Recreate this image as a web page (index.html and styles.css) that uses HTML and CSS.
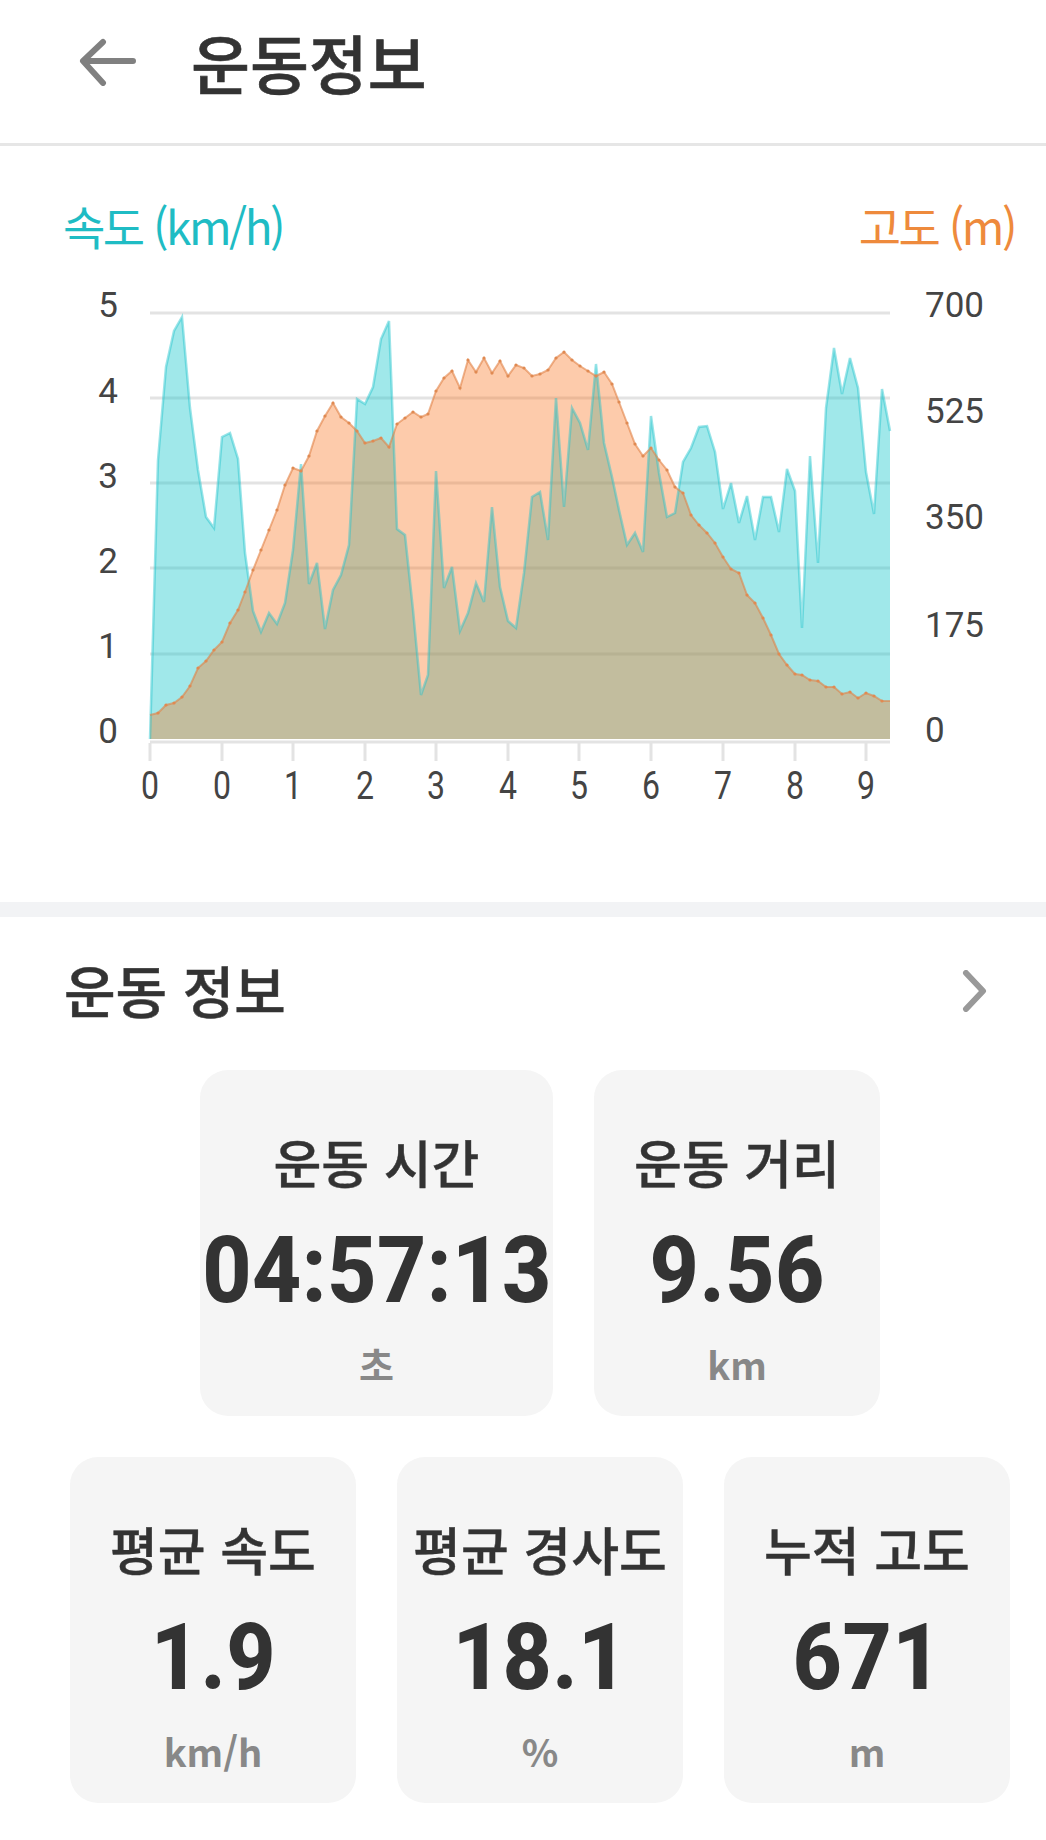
FILE: index.html
```html
<!DOCTYPE html>
<html lang="ko">

<head>
  <meta charset="UTF-8">
  <meta name="viewport" content="width=device-width, initial-scale=1.0">
  <title>운동정보</title>
  <link rel="stylesheet" href="styles.css">
</head>

<body>
  <div class="page">
    <!--상단 제목-->
    <header class="top-bar">
      <svg class="back-icon" width="60" height="48" viewBox="0 0 60 48">
        <path d="M54 23H5M24 4L4 23L24 45" />
      </svg>
      <h1 class="top-title">운동정보</h1>
    </header>

    <!--그래프-->
    <section class="chart-section">
      <div class="chart-head">
        <span class="speed-title">속도 (km/h)</span>
        <span class="alt-title">고도 (m)</span>
      </div>
      <svg class="chart" width="1046" height="632" viewBox="0 270 1046 632">
        <defs>
          <marker id="dot" markerWidth="4" markerHeight="4" refX="2" refY="2" markerUnits="userSpaceOnUse">
            <circle cx="2" cy="2" r="1.6" fill="#e08a52" />
          </marker>
        </defs>

        <g class="grid">
          <path d="M150 313H890M150 398H890M150 483H890M150 568H890M150 654H890" />
          <path d="M150 742H890" />
          <path d="M150 743V761M222 743V761M293 743V761M365 743V761M436 743V761M508 743V761M579 743V761M651 743V761M723 743V761M795 743V761M866 743V761" />
        </g>

        <polygon class="speed-area" points="150,739 158,460 166,367 174,331 182,317 190,408 198,470 206,517 214,528 222,437 230,433 238,459 245,553 253,611 261,632 269,613 277,624 285,603 293,550 301,464 309,584 317,563 325,629 333,590 341,575 349,545 357,399 365,404 373,387 381,339 389,321 397,529 405,535 413,610 421,695 428,675 436,471 444,588 452,567 460,631 468,613 476,583 484,602 492,507 500,587 508,621 516,628 524,573 532,497 540,492 548,540 556,398 564,507 572,408 580,423 588,450 596,364 604,443 612,477 619,510 627,545 635,533 643,552 651,416 659,473 667,517 675,513 683,462 691,448 699,427 707,426 715,452 723,509 731,483 739,523 747,496 755,540 763,497 771,497 779,532 787,469 795,491 802,628 810,456 818,563 826,408 834,348 842,394 850,358 858,388 866,472 874,514 882,389 890,431 890,739" />
        <polygon class="alt-area" points="150,739 150,715 158,713 166,705 174,703 182,697 190,686 198,668 206,661 214,650 222,642 230,623 238,610 245,592 253,570 261,550 269,530 277,510 285,485 293,468 301,471 309,456 317,431 325,416 333,403 341,417 349,423 357,431 365,443 373,441 381,438 389,447 397,424 405,418 413,412 421,417 428,414 436,391 444,378 452,371 460,388 468,360 476,372 484,358 492,373 500,361 508,376 516,365 524,368 532,376 540,374 548,370 556,358 564,352 572,360 580,366 588,371 596,376 604,372 612,384 619,402 627,423 635,444 643,456 651,448 659,460 667,470 675,487 683,493 691,515 699,525 707,533 715,543 723,557 731,569 739,573 747,595 755,603 763,618 771,635 779,654 787,665 795,674 802,675 810,680 818,681 826,687 834,687 842,694 850,692 858,698 866,693 874,696 882,701 890,701 890,739" />
        <polyline class="speed-line" points="150,739 158,460 166,367 174,331 182,317 190,408 198,470 206,517 214,528 222,437 230,433 238,459 245,553 253,611 261,632 269,613 277,624 285,603 293,550 301,464 309,584 317,563 325,629 333,590 341,575 349,545 357,399 365,404 373,387 381,339 389,321 397,529 405,535 413,610 421,695 428,675 436,471 444,588 452,567 460,631 468,613 476,583 484,602 492,507 500,587 508,621 516,628 524,573 532,497 540,492 548,540 556,398 564,507 572,408 580,423 588,450 596,364 604,443 612,477 619,510 627,545 635,533 643,552 651,416 659,473 667,517 675,513 683,462 691,448 699,427 707,426 715,452 723,509 731,483 739,523 747,496 755,540 763,497 771,497 779,532 787,469 795,491 802,628 810,456 818,563 826,408 834,348 842,394 850,358 858,388 866,472 874,514 882,389 890,431" />
        <polyline class="alt-line" points="150,715 158,713 166,705 174,703 182,697 190,686 198,668 206,661 214,650 222,642 230,623 238,610 245,592 253,570 261,550 269,530 277,510 285,485 293,468 301,471 309,456 317,431 325,416 333,403 341,417 349,423 357,431 365,443 373,441 381,438 389,447 397,424 405,418 413,412 421,417 428,414 436,391 444,378 452,371 460,388 468,360 476,372 484,358 492,373 500,361 508,376 516,365 524,368 532,376 540,374 548,370 556,358 564,352 572,360 580,366 588,371 596,376 604,372 612,384 619,402 627,423 635,444 643,456 651,448 659,460 667,470 675,487 683,493 691,515 699,525 707,533 715,543 723,557 731,569 739,573 747,595 755,603 763,618 771,635 779,654 787,665 795,674 802,675 810,680 818,681 826,687 834,687 842,694 850,692 858,698 866,693 874,696 882,701 890,701" />

        <g class="axis-left">
          <text x="118" y="317">5</text>
          <text x="118" y="403">4</text>
          <text x="118" y="488">3</text>
          <text x="118" y="573">2</text>
          <text x="118" y="658">1</text>
          <text x="118" y="743">0</text>
        </g>
        <g class="axis-right">
          <text x="925" y="317">700</text>
          <text x="925" y="423">525</text>
          <text x="925" y="529">350</text>
          <text x="925" y="637">175</text>
          <text x="925" y="742">0</text>
        </g>
        <g class="axis-bottom">
          <text x="150" y="799" textLength="18" lengthAdjust="spacingAndGlyphs">0</text>
          <text x="222" y="799" textLength="18" lengthAdjust="spacingAndGlyphs">0</text>
          <text x="293" y="799" textLength="18" lengthAdjust="spacingAndGlyphs">1</text>
          <text x="365" y="799" textLength="18" lengthAdjust="spacingAndGlyphs">2</text>
          <text x="436" y="799" textLength="18" lengthAdjust="spacingAndGlyphs">3</text>
          <text x="508" y="799" textLength="18" lengthAdjust="spacingAndGlyphs">4</text>
          <text x="579" y="799" textLength="18" lengthAdjust="spacingAndGlyphs">5</text>
          <text x="651" y="799" textLength="18" lengthAdjust="spacingAndGlyphs">6</text>
          <text x="723" y="799" textLength="18" lengthAdjust="spacingAndGlyphs">7</text>
          <text x="795" y="799" textLength="18" lengthAdjust="spacingAndGlyphs">8</text>
          <text x="866" y="799" textLength="18" lengthAdjust="spacingAndGlyphs">9</text>
        </g>
      </svg>
    </section>

    <div class="band"></div>

    <!--운동 정보-->
    <section class="info">
      <div class="info-head">
        <h2 class="info-title">운동 정보</h2>
        <svg class="chevron" width="26" height="42" viewBox="0 0 26 42">
          <path d="M4 3L21 21L4 39" />
        </svg>
      </div>

      <div class="card-grid">
        <div class="card-row">
          <div class="card card-wide">
            <div class="card-label">운동 시간</div>
            <div class="card-value">04:57:13</div>
            <div class="card-unit">초</div>
          </div>
          <div class="card">
            <div class="card-label">운동 거리</div>
            <div class="card-value">9.56</div>
            <div class="card-unit">km</div>
          </div>
        </div>
        <div class="card-row">
          <div class="card">
            <div class="card-label">평균 속도</div>
            <div class="card-value">1.9</div>
            <div class="card-unit">km/h</div>
          </div>
          <div class="card">
            <div class="card-label">평균 경사도</div>
            <div class="card-value">18.1</div>
            <div class="card-unit">%</div>
          </div>
          <div class="card">
            <div class="card-label">누적 고도</div>
            <div class="card-value">671</div>
            <div class="card-unit">m</div>
          </div>
        </div>
      </div>
    </section>
  </div>
</body>

</html>
```

FILE: styles.css
```css
* {
  margin: 0;
  padding: 0;
  box-sizing: border-box;
}

body {
  background-color: #fff;
  font-family: "Noto Sans CJK KR", "Roboto", sans-serif;
  color: #333;
}

.page {
  width: 1046px;
  height: 1840px;
  overflow: hidden;
}

/*상단 제목*/
.top-bar {
  height: 146px;
  padding: 0 0 20px 79px;
  display: flex;
  align-items: center;
  border-bottom: 3px solid #e6e6e6;
}

.back-icon {
  display: block;
}

.back-icon path {
  fill: none;
  stroke: #808080;
  stroke-width: 6;
  stroke-linecap: round;
  stroke-linejoin: round;
}

.top-title {
  margin-left: 52px;
  margin-bottom: 2px;
  font-size: 64px;
  line-height: 80px;
  font-weight: 500;
  -webkit-text-stroke: 0.6px #333;
}

/*그래프*/
.chart-section {
  height: 756px;
}

.chart-head {
  height: 124px;
  padding: 47px 31px 0 63px;
  display: flex;
  justify-content: space-between;
  font-size: 46px;
  line-height: 64px;
  letter-spacing: -2.5px;
}

.speed-title {
  color: #1fbcc4;
}

.alt-title {
  color: #ee8a3c;
}

.chart {
  display: block;
}

.grid path {
  fill: none;
  stroke: #e3e3e3;
  stroke-width: 3;
}

.speed-area {
  fill: rgba(17, 197, 202, 0.4);
}

.alt-area {
  fill: rgba(250, 118, 34, 0.38);
}

.speed-line {
  fill: none;
  stroke: rgba(30, 195, 205, 0.45);
  stroke-width: 2.5;
}

.alt-line {
  fill: none;
  stroke: rgba(225, 130, 70, 0.6);
  stroke-width: 2;
  marker-mid: url(#dot);
}

.axis-left text,
.axis-right text,
.axis-bottom text {
  font-family: "Roboto", sans-serif;
  font-size: 35px;
  fill: #444;
}

.axis-left text {
  text-anchor: end;
}

.axis-bottom text {
  font-size: 38px;
  text-anchor: middle;
}

.band {
  height: 15px;
  background-color: #f2f3f5;
}

/*운동 정보*/
.info-head {
  height: 153px;
  padding: 36px 58px 0 64px;
  display: flex;
  justify-content: space-between;
  align-items: flex-start;
}

.info-title {
  font-size: 56px;
  line-height: 72px;
  font-weight: 500;
  -webkit-text-stroke: 0.5px #333;
}

.chevron {
  display: block;
  margin-top: 17px;
}

.chevron path {
  fill: none;
  stroke: #999;
  stroke-width: 6;
  stroke-linecap: round;
  stroke-linejoin: round;
}

.card-grid {
  width: 940px;
  margin-left: 70px;
  display: flex;
  flex-direction: column;
  gap: 41px;
}

.card-row {
  display: flex;
  justify-content: center;
  gap: 41px;
}

.card {
  width: 286px;
  height: 346px;
  border-radius: 28px;
  background-color: #f5f5f5;
  display: flex;
  flex-direction: column;
  align-items: center;
  padding-top: 56px;
}

.card-wide {
  width: 353px;
}

.card-label {
  font-size: 52px;
  line-height: 72px;
  font-weight: 500;
  -webkit-text-stroke: 0.4px #333;
  white-space: nowrap;
}

.card-value {
  margin-top: 19px;
  font-family: "Roboto", sans-serif;
  font-size: 92px;
  line-height: 108px;
  font-weight: 800;
  letter-spacing: 0.5px;
  white-space: nowrap;
  transform: scaleX(0.93);
}

.card-unit {
  margin-top: 14px;
  font-size: 38px;
  line-height: 50px;
  font-weight: 700;
  color: #888;
}
```
